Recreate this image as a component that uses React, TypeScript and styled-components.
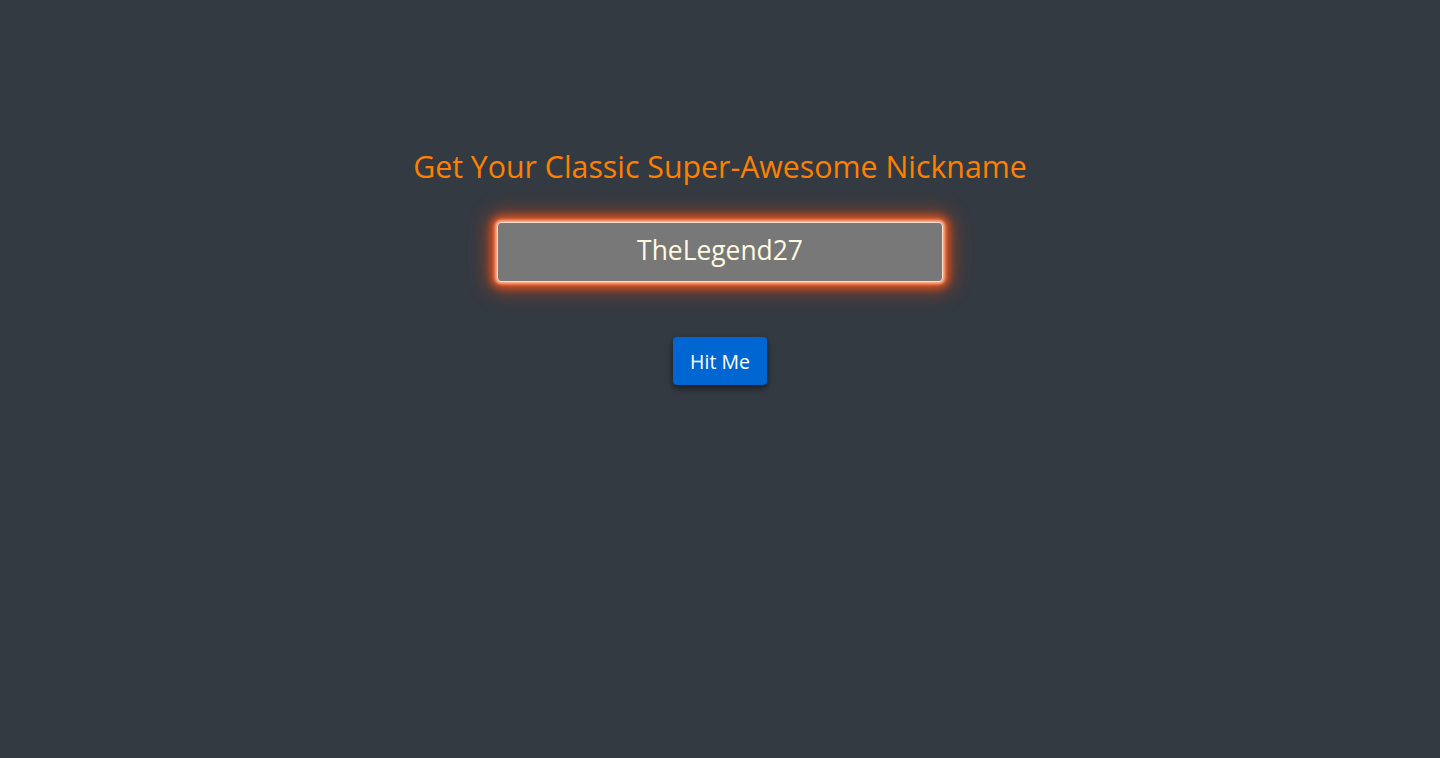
import React from "react";
import styled, { createGlobalStyle } from "styled-components";

const Global = createGlobalStyle`
  html, body { margin: 0; padding: 0; background: #343a42; }
  body { font-family: "Open Sans", "Noto Sans", sans-serif; }
`;

const Page = styled.main`
  min-height: 758px;
  background: #343a42;
  display: flex;
  flex-direction: column;
  align-items: center;
  padding-top: 146px;
  box-sizing: border-box;
`;

const Title = styled.h1`
  margin: 0;
  font-weight: 400;
  font-size: 30.3px;
  line-height: 42px;
  color: #ff8000;
`;

const NameBox = styled.div`
  margin-top: 34px;
  width: 446px;
  height: 60px;
  box-sizing: border-box;
  padding-bottom: 4px;
  background: #787878;
  border: 1px solid #fce0d0;
  border-radius: 4px;
  box-shadow: 0 0 3px 2px #ffb090, 0 0 8px 5px #f0581e, 0 0 20px 8px rgba(225, 70, 20, 0.6);
  display: flex;
  align-items: center;
  justify-content: center;
  color: #fffbe0;
  font-size: 26.4px;
`;

const HitButton = styled.button`
  margin-top: 55px;
  width: 94px;
  height: 48px;
  border: none;
  border-radius: 4px;
  background: #0066d2;
  color: #ffffff;
  font-family: inherit;
  font-size: 19.5px;
  padding: 0;
  box-shadow: 0 3px 6px rgba(0, 0, 0, 0.55);
  cursor: pointer;
`;

export default function App() {
  return (
    <>
      <Global />
      <Page>
        <Title>Get Your Classic Super-Awesome Nickname</Title>
        <NameBox>TheLegend27</NameBox>
        <HitButton>Hit Me</HitButton>
      </Page>
    </>
  );
}
